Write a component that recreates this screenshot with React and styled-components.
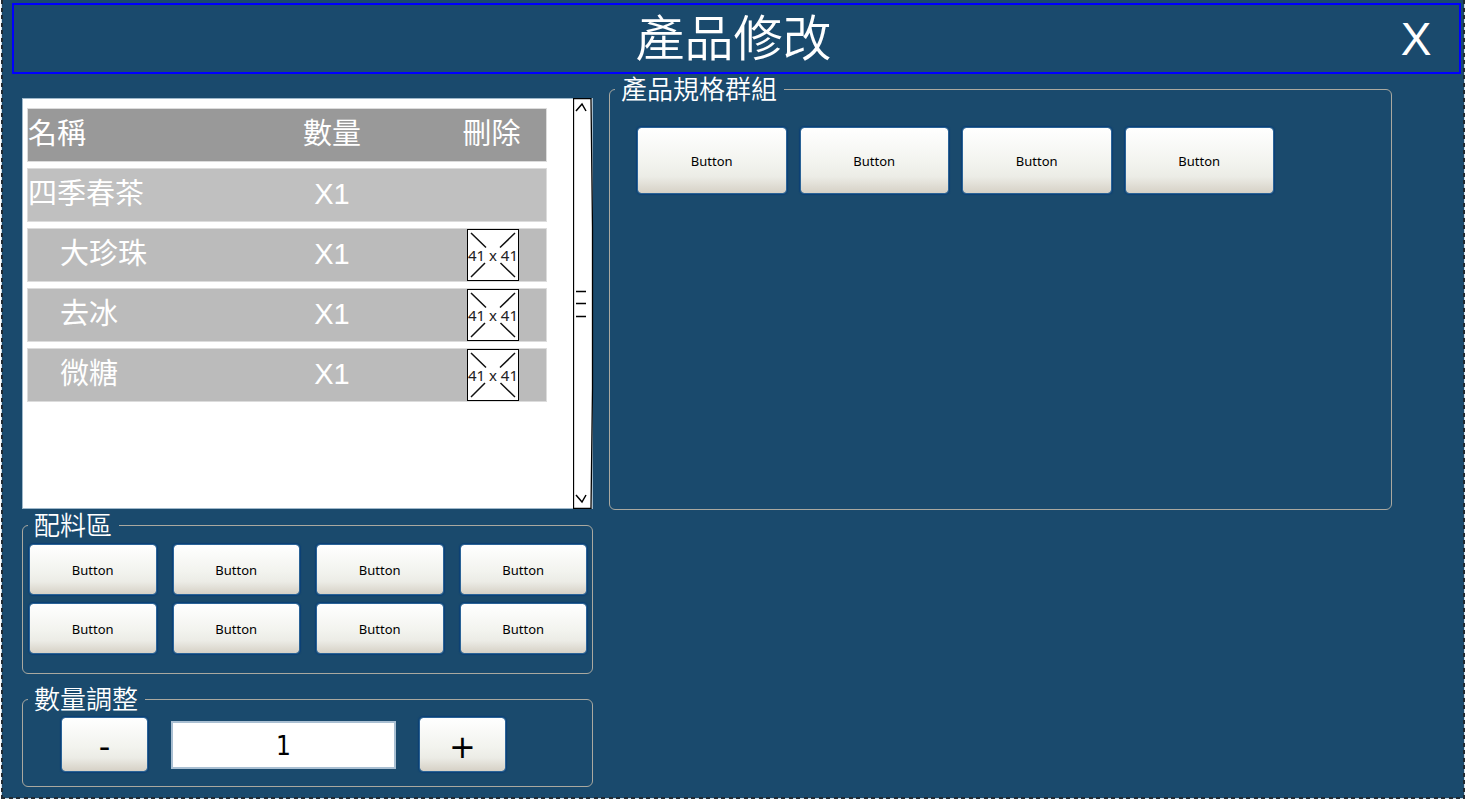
import React, { useState } from "react";
import styled, { createGlobalStyle, css } from "styled-components";

const cjk = `"Noto Sans CJK TC", sans-serif`;
const ui = `"Noto Sans", ${cjk}`;
const digits = `"DejaVu Sans Condensed", "DejaVu Sans", sans-serif`;
const latin = `"Liberation Sans", ${cjk}`;

const dashes = (direction) =>
  `repeating-linear-gradient(${direction}, #222b33 0 4px, transparent 4px 8px, #222b33 8px 12px, transparent 12px 15px)`;
const pale = "linear-gradient(#cddae4, #cddae4)";

const GlobalStyle = createGlobalStyle`
  *, *::before, *::after { box-sizing: border-box; }
  body { margin: 0; background: #fff; font-family: ${latin}; }
  button, input { font: inherit; margin: 0; }
`;

const Frame = styled.main`
  display: flex;
  flex-direction: column;
  min-height: calc(100vh - 1px);
  margin: 0 13px 1px 1px;
  padding: 3px 4px 12px 11px;
  background:
    ${dashes("to bottom")} left / 2px 100% no-repeat,
    ${dashes("to bottom")} right / 2px 100% no-repeat,
    ${dashes("to right")} bottom / 100% 2px no-repeat,
    ${pale} left / 1px 100% no-repeat,
    ${pale} right / 1px 100% no-repeat,
    ${pale} bottom / 100% 1px no-repeat,
    #1a4a6d;
`;

const Header = styled.header`
  display: grid;
  grid-template-columns: 80px 1fr 86px;
  align-items: start;
  height: 71px;
  border: 2px solid #00f;
  color: #fff;
`;

const Title = styled.h1`
  grid-column: 2;
  margin: 0;
  font: 350 49px/60px ${cjk};
  text-align: center;
`;

const CloseButton = styled.button`
  border: 0;
  padding: 2px 0 0;
  background: none;
  color: #fff;
  font: 46px/64px ${latin};
  cursor: pointer;
`;

const Body = styled.div`
  display: grid;
  grid-template-columns: minmax(0, 571fr) minmax(0, 783fr);
  align-items: start;
  gap: 16px;
  padding: 2px 69px 0 10px;
`;

const LeftColumn = styled.div`
  display: flex;
  flex-direction: column;
  padding-top: 22px;
`;

const OrderPanel = styled.section`
  display: flex;
  height: 411px;
  border: 1px solid #9fb8ca;
  background: #fff;
`;

const OrderList = styled.div`
  flex: 1;
  padding: 3px 27px 0 4px;
`;

const OrderTable = styled.table`
  width: 100%;
  table-layout: fixed;
  border-collapse: separate;
  border-spacing: 0 6px;
  color: #fff;
  font: 29px/44px ${latin};
`;

const cell = css`
  height: 54px;
  padding: 0 0 2px;
  border: solid #dcdcdc;
  border-width: 1px 0;
  font-weight: 400;
  text-align: center;
  &:first-child { border-left-width: 1px; text-align: left; }
  &:last-child { border-right-width: 1px; }
`;

const HeadCell = styled.th`
  ${cell}
  background: #999;
`;

const Cell = styled.td`
  ${cell}
  background: ${(p) => (p.$sub ? "#bbb" : "#c0c0c0")};
  &:first-child { padding-left: ${(p) => (p.$sub ? "32px" : "0")}; }
  &:last-child { padding: 0 0 0 2px; }
`;

const DeleteButton = styled.button`
  display: block;
  width: 52px;
  height: 52px;
  margin: 0 auto;
  padding: 0;
  border: 0;
  background: #fff;
  cursor: pointer;
  svg { display: block; }
`;

const ScrollTrack = styled.div`
  flex: none;
  width: 21px;
  margin: -1px -2px -1px -1px;
  svg { display: block; width: 21px; height: 100%; }
`;

const Group = styled.fieldset`
  min-width: 0;
  margin: ${(p) => p.$top || 0}px 0 0;
  padding: 0 5px;
  border: 1px solid #aaa9a0;
  border-radius: 6px;
  height: ${(p) => p.$height}px;
`;

const Legend = styled.legend`
  height: 26px;
  padding: 0 7px 0 6px;
  color: #fff;
  font: 350 26px/24px ${cjk};
`;

const ButtonGrid = styled.div`
  display: grid;
  grid-template-columns: repeat(4, minmax(0, 1fr));
  gap: ${(p) => (p.$large ? "13px" : "8px 16px")};
  padding: ${(p) => (p.$large ? "25px 112px 0 22px" : "6px 0 0 1px")};
`;

const heights = { small: 51, medium: 55, large: 67 };

const PushButton = styled.button`
  min-width: 0;
  height: ${(p) => heights[p.$size]}px;
  padding: ${(p) => (p.$size === "medium" ? "4px 0 0" : "1px 0 0")};
  border: 1px solid #2b6396;
  border-radius: 4px;
  background: linear-gradient(#fff 0%, #f2f3ee 55%, #ecece6 75%, #d6d1c6 100%);
  background-clip: padding-box;
  box-shadow: 0 0 1px 1px #0c4075;
  color: #000;
  font: ${(p) => (p.$size === "medium" ? `32px/32px "DejaVu Sans", sans-serif` : `13px/16px ${ui}`)};
  cursor: pointer;
`;

const QuantityRow = styled.div`
  display: grid;
  grid-template-columns: minmax(0, 87fr) minmax(0, 225fr) minmax(0, 87fr);
  align-items: center;
  gap: 23px;
  padding: 5px 81px 0 33px;
`;

const QuantityInput = styled.input`
  min-width: 0;
  width: 100%;
  height: 48px;
  padding: 3px 0 0;
  border: 2px solid #a9bfd2;
  border-radius: 0;
  background: #fff;
  color: #000;
  font: 26px/32px ${digits};
  text-align: center;
`;

const items = [
  { name: "四季春茶" },
  { name: "大珍珠", sub: true },
  { name: "去冰", sub: true },
  { name: "微糖", sub: true },
];

const toppings = Array.from({ length: 8 }, (_, i) => i);
const specs = Array.from({ length: 4 }, (_, i) => i);

function Placeholder() {
  return (
    <svg width="52" height="52" viewBox="0 0 52 52" aria-hidden="true">
      <rect x="0.5" y="0.5" width="51" height="51" fill="#fff" stroke="#000" />
      <path
        d="M4 4 19 18.500M48 4 33 18.500M4 48 18 34M48 48 33.500 34"
        stroke="#111"
        strokeWidth="1.5"
        fill="none"
      />
      <text x="26" y="32" textAnchor="middle" fontSize="15" fontFamily="Noto Sans, sans-serif" fill="#222">
        41 x 41
      </text>
    </svg>
  );
}

function Scrollbar() {
  return (
    <ScrollTrack aria-hidden="true">
      <svg viewBox="0 0 21 411" preserveAspectRatio="none" fill="none" stroke="#000">
        <path d="M0.5 0.5H18L19.500 130V290L18 410.500H0.5Z" fill="#fff" strokeWidth="1.3" />
        <path d="M3 13 9 6 13 13M3 397 9 404 13 397" strokeWidth="1.5" />
        <path d="M3 193.500H13M3 205.500H13M3 218.500H13" strokeWidth="1.3" />
      </svg>
    </ScrollTrack>
  );
}

export default function App() {
  const [quantity, setQuantity] = useState(1);
  return (
    <>
      <GlobalStyle />
      <Frame>
        <Header>
          <Title>產品修改</Title>
          <CloseButton type="button">X</CloseButton>
        </Header>
        <Body>
          <LeftColumn>
            <OrderPanel>
              <OrderList>
                <OrderTable>
                  <colgroup>
                    <col width="200" />
                    <col width="210" />
                    <col width="110" />
                  </colgroup>
                  <thead>
                    <tr>
                      <HeadCell scope="col">名稱</HeadCell>
                      <HeadCell scope="col">數量</HeadCell>
                      <HeadCell scope="col">刪除</HeadCell>
                    </tr>
                  </thead>
                  <tbody>
                    {items.map(({ name, sub }) => (
                      <tr key={name}>
                        <Cell $sub={sub}>{name}</Cell>
                        <Cell $sub={sub}>X1</Cell>
                        <Cell $sub={sub}>
                          {sub && (
                            <DeleteButton type="button" aria-label={`刪除 ${name}`}>
                              <Placeholder />
                            </DeleteButton>
                          )}
                        </Cell>
                      </tr>
                    ))}
                  </tbody>
                </OrderTable>
              </OrderList>
              <Scrollbar />
            </OrderPanel>
            <Group $top={3} $height={162}>
              <Legend>配料區</Legend>
              <ButtonGrid>
                {toppings.map((i) => (
                  <PushButton key={i} type="button" $size="small">Button</PushButton>
                ))}
              </ButtonGrid>
            </Group>
            <Group $top={12} $height={101}>
              <Legend>數量調整</Legend>
              <QuantityRow>
                <PushButton type="button" $size="medium" onClick={() => setQuantity(Math.max(1, quantity - 1))}>
                  -
                </PushButton>
                <QuantityInput
                  aria-label="數量調整"
                  inputMode="numeric"
                  value={quantity}
                  onChange={(e) => setQuantity(Number(e.target.value) || 1)}
                />
                <PushButton type="button" $size="medium" onClick={() => setQuantity(quantity + 1)}>
                  +
                </PushButton>
              </QuantityRow>
            </Group>
          </LeftColumn>
          <Group $height={434}>
            <Legend>產品規格群組</Legend>
            <ButtonGrid $large>
              {specs.map((i) => (
                <PushButton key={i} type="button" $size="large">Button</PushButton>
              ))}
            </ButtonGrid>
          </Group>
        </Body>
      </Frame>
    </>
  );
}
